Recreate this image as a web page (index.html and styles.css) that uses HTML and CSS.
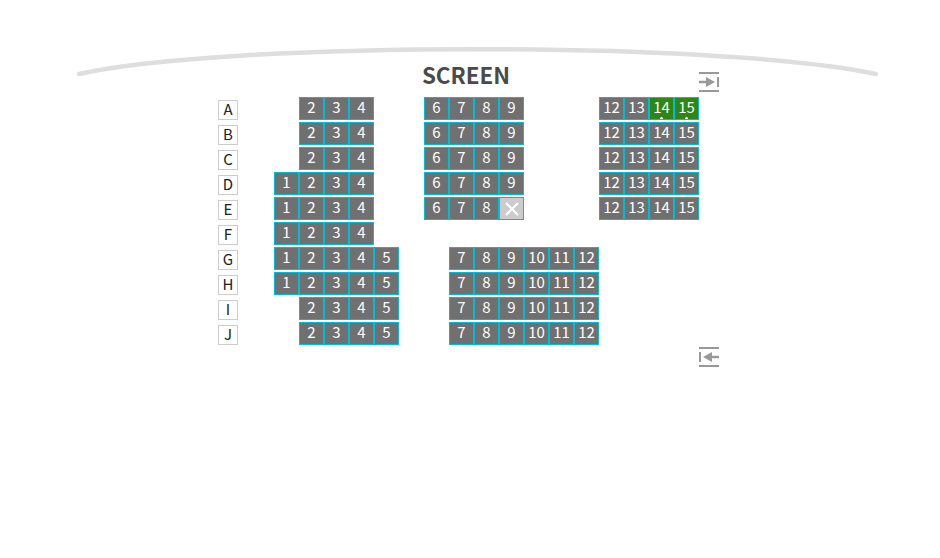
FILE: index.html
```html
<!DOCTYPE html>
<html lang="en">

<head>
    <meta charset="UTF-8">
    <meta name="viewport" content="width=device-width, initial-scale=1.0">
    <title>Seat Map</title>
    <link rel="stylesheet" href="styles.css">
</head>

<body>
    <div class="theater">
        <svg class="screen-arc" width="804" height="32" viewBox="0 0 804 32">
            <path d="M4 28 C 150 -5 650 -5 801 28" fill="none" stroke="#dedede" stroke-width="4.5" stroke-linecap="round"/>
        </svg>
        <h1 class="screen-title">SCREEN</h1>

        <div class="exit-row exit-top">
            <svg width="20" height="20" viewBox="0 0 20 20">
                <path d="M0 1h20M0 19h20" stroke="#999" stroke-width="2"/>
                <path d="M0 10h10" stroke="#999" stroke-width="2.5" fill="none"/>
                <path d="M19 5v10" stroke="#999" stroke-width="2" fill="none"/>
                <path d="M7 5l9 5l-9 5z" fill="#999"/>
            </svg>
        </div>

        <div class="seat-map">
            <div class="row">
                <span class="row-label">A</span>
                <span class="gap-1"></span>
                <span class="seat">2</span><span class="seat">3</span><span class="seat">4</span>
                <span class="gap-2"></span>
                <span class="seat">6</span><span class="seat">7</span><span class="seat">8</span><span class="seat">9</span>
                <span class="gap-3"></span>
                <span class="seat">12</span><span class="seat">13</span><span class="seat picked">14</span><span class="seat picked">15</span>
            </div>
            <div class="row">
                <span class="row-label">B</span>
                <span class="gap-1"></span>
                <span class="seat">2</span><span class="seat">3</span><span class="seat">4</span>
                <span class="gap-2"></span>
                <span class="seat">6</span><span class="seat">7</span><span class="seat">8</span><span class="seat">9</span>
                <span class="gap-3"></span>
                <span class="seat">12</span><span class="seat">13</span><span class="seat">14</span><span class="seat">15</span>
            </div>
            <div class="row">
                <span class="row-label">C</span>
                <span class="gap-1"></span>
                <span class="seat">2</span><span class="seat">3</span><span class="seat">4</span>
                <span class="gap-2"></span>
                <span class="seat">6</span><span class="seat">7</span><span class="seat">8</span><span class="seat">9</span>
                <span class="gap-3"></span>
                <span class="seat">12</span><span class="seat">13</span><span class="seat">14</span><span class="seat">15</span>
            </div>
            <div class="row">
                <span class="row-label">D</span>
                <span class="seat">1</span><span class="seat">2</span><span class="seat">3</span><span class="seat">4</span>
                <span class="gap-2"></span>
                <span class="seat">6</span><span class="seat">7</span><span class="seat">8</span><span class="seat">9</span>
                <span class="gap-3"></span>
                <span class="seat">12</span><span class="seat">13</span><span class="seat">14</span><span class="seat">15</span>
            </div>
            <div class="row">
                <span class="row-label">E</span>
                <span class="seat">1</span><span class="seat">2</span><span class="seat">3</span><span class="seat">4</span>
                <span class="gap-2"></span>
                <span class="seat">6</span><span class="seat">7</span><span class="seat">8</span>
                <span class="seat sold">
                    <svg width="16" height="16" viewBox="0 0 16 16">
                        <path d="M2 2l12 12M14 2L2 14" stroke="#fff" stroke-width="2"/>
                    </svg>
                </span>
                <span class="gap-3"></span>
                <span class="seat">12</span><span class="seat">13</span><span class="seat">14</span><span class="seat">15</span>
            </div>
            <div class="row">
                <span class="row-label">F</span>
                <span class="seat">1</span><span class="seat">2</span><span class="seat">3</span><span class="seat">4</span>
            </div>
            <div class="row">
                <span class="row-label">G</span>
                <span class="seat">1</span><span class="seat">2</span><span class="seat">3</span><span class="seat">4</span><span class="seat">5</span>
                <span class="gap-2"></span>
                <span class="seat">7</span><span class="seat">8</span><span class="seat">9</span><span class="seat">10</span><span class="seat">11</span><span class="seat">12</span>
            </div>
            <div class="row">
                <span class="row-label">H</span>
                <span class="seat">1</span><span class="seat">2</span><span class="seat">3</span><span class="seat">4</span><span class="seat">5</span>
                <span class="gap-2"></span>
                <span class="seat">7</span><span class="seat">8</span><span class="seat">9</span><span class="seat">10</span><span class="seat">11</span><span class="seat">12</span>
            </div>
            <div class="row">
                <span class="row-label">I</span>
                <span class="gap-1"></span>
                <span class="seat">2</span><span class="seat">3</span><span class="seat">4</span><span class="seat">5</span>
                <span class="gap-2"></span>
                <span class="seat">7</span><span class="seat">8</span><span class="seat">9</span><span class="seat">10</span><span class="seat">11</span><span class="seat">12</span>
            </div>
            <div class="row">
                <span class="row-label">J</span>
                <span class="gap-1"></span>
                <span class="seat">2</span><span class="seat">3</span><span class="seat">4</span><span class="seat">5</span>
                <span class="gap-2"></span>
                <span class="seat">7</span><span class="seat">8</span><span class="seat">9</span><span class="seat">10</span><span class="seat">11</span><span class="seat">12</span>
            </div>
        </div>

        <div class="exit-row exit-bottom">
            <svg width="20" height="20" viewBox="0 0 20 20">
                <path d="M0 1h20M0 19h20" stroke="#999" stroke-width="2"/>
                <path d="M20 10H10" stroke="#999" stroke-width="2.5" fill="none"/>
                <path d="M1 5v10" stroke="#999" stroke-width="2" fill="none"/>
                <path d="M13 5l-9 5l9 5z" fill="#999"/>
            </svg>
        </div>
    </div>
</body>

</html>
```

FILE: styles.css
```css
body {
    font-family: 'Noto Sans CJK KR', 'Noto Sans', sans-serif;
    background: white;
    color: #333;
    margin: 0;
}

.theater {
    position: relative;
    width: 940px;
    height: 558px;
    padding-top: 60px;
    box-sizing: border-box;
}

.screen-arc {
    position: absolute;
    left: 75px;
    top: 46px;
}

.screen-title {
    margin: 0;
    padding-right: 8px;
    height: 30px;
    line-height: 28px;
    text-align: center;
    font-size: 22.4px;
    font-weight: bold;
    color: #4a4a4a;
}

.exit-row {
    display: flex;
    justify-content: flex-end;
    width: 719px;
    height: 20px;
}

.exit-top {
    position: absolute;
    left: 0;
    top: 72px;
}

.exit-bottom {
    margin-top: 2px;
}

.exit-row svg {
    display: block;
}

.seat-map {
    display: flex;
    flex-direction: column;
    gap: 2px;
    margin: 7px 0 0 218px;
}

.row {
    display: flex;
    align-items: flex-start;
    height: 23px;
}

.row-label {
    width: 20px;
    height: 20px;
    margin: 3px 36px 0 0;
    box-sizing: border-box;
    border: 1px solid #ccc;
    font-size: 15px;
    line-height: 16px;
    text-align: center;
    color: #222;
}

.gap-1 {
    width: 25px;
}

.gap-2 {
    width: 50px;
}

.gap-3 {
    width: 75px;
}

.seat {
    position: relative;
    width: 25px;
    height: 23px;
    box-sizing: border-box;
    border: 1px solid #00bcd4;
    background-color: #707070;
    color: white;
    font-size: 15px;
    line-height: 18px;
    text-align: center;
}

.picked {
    background-color: #2e8616;
}

.picked::after {
    content: "";
    position: absolute;
    left: 10px;
    bottom: 0;
    width: 3px;
    height: 2px;
    border-radius: 2px 2px 0 0;
    background-color: white;
}

.sold {
    display: flex;
    align-items: center;
    justify-content: center;
    background-color: #ccc;
}
```
